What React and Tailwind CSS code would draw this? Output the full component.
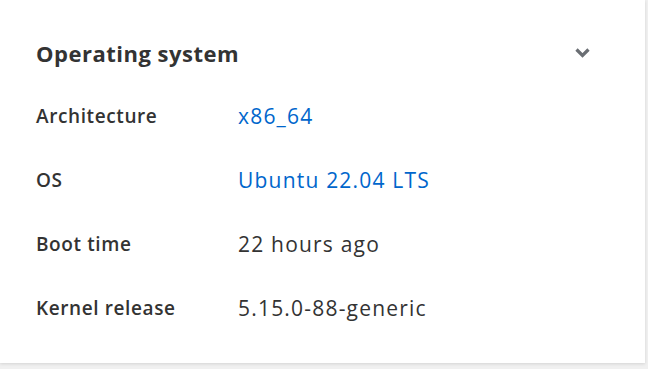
export default function App() {
  const rows = [
    { label: "Architecture", value: "x86_64", link: true },
    { label: "OS", value: "Ubuntu 22.04 LTS", link: true },
    { label: "Boot time", value: "22 hours ago" },
    { label: "Kernel release", value: "5.15.0-88-generic" },
  ];

  return (
    <div className="h-[369px] w-[648px] overflow-hidden bg-[#f0f0f0] font-['Open_Sans',sans-serif]">
      <div className="h-[363px] w-[645px] bg-white shadow-[0_1px_3px_rgba(0,0,0,0.12)]">
        {/* Header */}
        <div className="flex items-center justify-between pl-[36px] pr-[55px] pt-[38px]">
          <h2 className="text-[22px] font-bold leading-[30px] tracking-[0.5px] text-[#333]">
            Operating system
          </h2>
          <svg width="15" height="10" viewBox="0 0 15 10" className="text-[#6a6e73]">
            <path d="M1.5 1.5 L7.5 7.5 L13.5 1.5" fill="none" stroke="currentColor" strokeWidth="3.2" />
          </svg>
        </div>

        {/* Details */}
        <div className="mt-[33px] grid grid-cols-[202px_1fr] gap-y-[34px] pl-[36px]">
          {rows.map((row) => (
            <div key={row.label} className="contents">
              <div className="text-[19px] font-semibold leading-[30px] tracking-[0.6px] text-[#333]">
                {row.label}
              </div>
              <div
                className={
                  "text-[21px] leading-[30px] tracking-[1.2px] " +
                  (row.link ? "text-[#0066cc]" : "text-[#333]")
                }
              >
                {row.value}
              </div>
            </div>
          ))}
        </div>
      </div>
    </div>
  );
}
